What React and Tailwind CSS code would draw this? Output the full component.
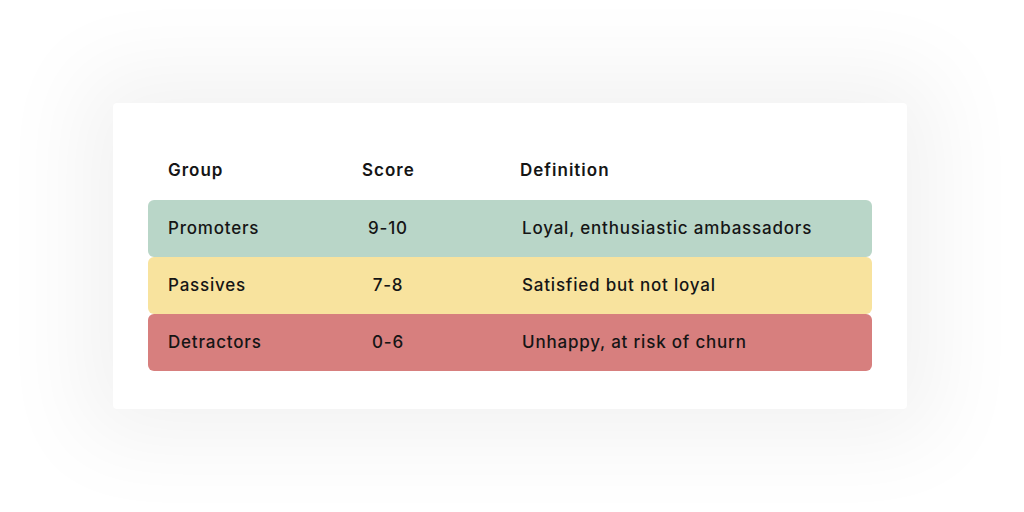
const rows = [
  { group: "Promoters", score: "9-10", definition: "Loyal, enthusiastic ambassadors", color: "bg-[#b9d6c8]" },
  { group: "Passives", score: "7-8", definition: "Satisfied but not loyal", color: "bg-[#f8e39e]" },
  { group: "Detractors", score: "0-6", definition: "Unhappy, at risk of churn", color: "bg-[#d77f7e]" },
];

export default function App() {
  return (
    <div className="w-[1024px] h-[512px] bg-white flex items-center justify-center font-['Inter',sans-serif] text-[#151515]">
      <div className="w-[794px] h-[306px] ml-[-4px] bg-white rounded-[4px] shadow-[0_0_90px_30px_rgba(0,0,0,0.055)] pt-[48px] px-[35px] pb-[38px]">
        <div className="h-[40px] mb-[9px] flex items-center pl-[20px] text-[17px] font-semibold tracking-[1px]">
          <div className="w-[194px]">Group</div>
          <div className="w-[158px]">Score</div>
          <div>Definition</div>
        </div>
        {rows.map((row) => (
          <div
            key={row.group}
            className={`h-[57px] flex items-center pl-[20px] rounded-[6px] text-[17px] font-medium tracking-[0.8px] ${row.color}`}
          >
            <div className="w-[194px]">{row.group}</div>
            <div className="w-[158px]">
              <div className="w-[52px] text-center">{row.score}</div>
            </div>
            <div className="pl-[2px]">{row.definition}</div>
          </div>
        ))}
      </div>
    </div>
  );
}
